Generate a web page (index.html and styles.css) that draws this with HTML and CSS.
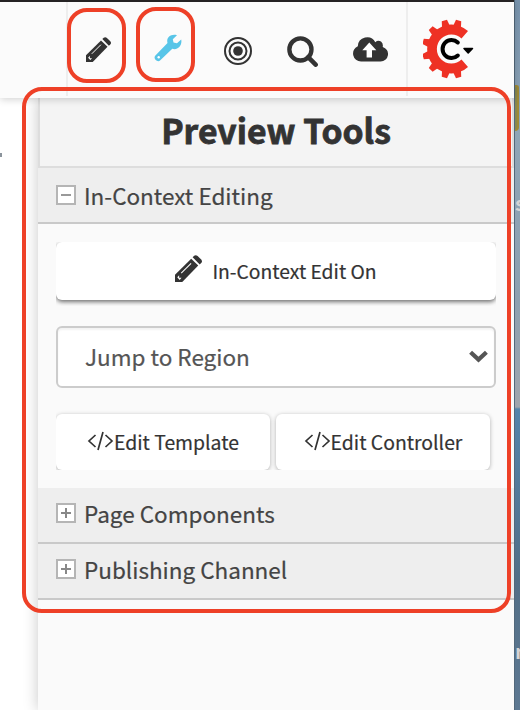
FILE: index.html
```html
<!DOCTYPE html>
<html lang="en">
<head>
<meta charset="utf-8">
<title>Preview Tools</title>
<link rel="stylesheet" href="styles.css">
</head>
<body>
<svg class="defs" width="0" height="0" aria-hidden="true">
  <symbol id="pencil" viewBox="0 0 26 26">
    <path d="M0 26V19L15.6 3.6L22.4 10.2L7 26Z" fill="#333"/>
    <path d="M17 2.2L18.4 .8Q20 -.6 21.8 1L25.2 4.4Q26.800 6.200 25.200 7.800L23.800 9.200Z" fill="#333"/>
    <path d="M6 17.500L15.500 8" stroke="#fff" stroke-width="1" fill="none"/>
    <path d="M2.200 21.500L4 19.500V22H6.300L4.500 24Z" fill="#fff"/>
  </symbol>
  <symbol id="code" viewBox="0 0 26 20">
    <path d="M8 4L1.500 10L8 16M18 4L24.500 10L18 16M15.500 1L10.500 19" fill="none" stroke="#333" stroke-width="1.700"/>
  </symbol>
</svg>
<div class="screen">
  <div class="window">
    <header class="toolbar">
      <nav class="tools">
        <svg class="tool-pencil"><use href="#pencil"/></svg>
        <svg class="tool-wrench" viewBox="0 0 28 28">
          <path d="M13.500 9C12 4 16.500 -.5 23 1.200L18.800 5.200L19.500 8.600L23 9.200L27.200 5.600C28.500 12 23.500 16.500 18.300 14.800L6.300 26.300C3.500 29 -1.500 24.500 1.400 21.500Z" fill="#58c5e8"/>
          <circle cx="4.700" cy="23.300" r="1.200" fill="#fff"/>
        </svg>
        <svg class="tool-target" viewBox="0 0 28 28" fill="none" stroke="#333" stroke-width="2">
          <circle cx="14" cy="14" r="13"/><circle cx="14" cy="14" r="8.500"/><circle cx="14" cy="14" r="4.800" fill="#333" stroke="none"/>
        </svg>
        <svg class="tool-search" viewBox="0 0 30 30" fill="none" stroke="#333">
          <circle cx="13" cy="13" r="10.700" stroke-width="4.200"/><path d="M20.500 20.500L27.700 27.700" stroke-width="4.400" stroke-linecap="round"/>
        </svg>
        <svg class="tool-cloud" viewBox="0 0 35 26">
          <path d="M8 25.500A8 8 0 0 1 4.800 10.200A9.300 9.300 0 0 1 22.300 6.200Q25 3.800 28 5.600Q30.500 7.500 29.700 11A7.400 7.400 0 0 1 27.500 25.500Z" fill="#333"/>
          <path d="M16.300 6.500L23.300 14.300H19V21.500H13.600V14.300H9.300Z" fill="#fff"/>
        </svg>
      </nav>
      <div class="brand">
        <svg class="logo" viewBox="0 0 52 60">
          <defs><path id="tooth" d="M24.500 7L25.800 .6H31.200L32.500 7Z"/></defs>
          <g fill="#ee3124">
            <path d="M45 12A24.400 24.400 0 1 0 45 48L38.500 40.600A14.600 14.600 0 1 1 38.500 19.400Z"/>
            <use href="#tooth" transform="rotate(14 28.500 30)"/>
            <use href="#tooth" transform="rotate(-14 28.500 30)"/>
            <use href="#tooth" transform="rotate(-45 28.500 30)"/>
            <use href="#tooth" transform="rotate(-75 28.500 30)"/>
            <use href="#tooth" transform="rotate(-105 28.500 30)"/>
            <use href="#tooth" transform="rotate(-135 28.500 30)"/>
            <use href="#tooth" transform="rotate(-166 28.500 30)"/>
            <use href="#tooth" transform="rotate(166 28.500 30)"/>
          </g>
          <path d="M34.800 23.500A9 9 0 1 0 34.800 36.500" fill="none" stroke="#000" stroke-width="4" stroke-linecap="round"/>
          <path d="M41 29.500H49.500L45.200 34Z" fill="#000" stroke="#000" stroke-width="1.500" stroke-linejoin="round"/>
        </svg>
      </div>
    </header>
    <main class="workspace">
      <div class="page"><span class="page-mark"></span></div>
      <aside class="panel">
        <h1 class="title">Preview Tools</h1>
        <h2 class="section"><span class="toggle open"></span><span class="label">In-Context Editing</span></h2>
        <div class="content">
          <div class="edit-row"><button class="edit-on"><svg class="edit-icon"><use href="#pencil"/></svg><span>In-Context Edit On</span></button></div>
          <div class="select"><span class="label">Jump to Region</span><svg class="chevron" viewBox="0 0 18 12"><path d="M1.500 2L9 9L16.500 2" fill="none" stroke="#555" stroke-width="4"/></svg></div>
          <div class="code-row">
            <button class="code-button"><svg class="code-icon"><use href="#code"/></svg><span class="label">Edit Template</span></button>
            <button class="code-button"><svg class="code-icon"><use href="#code"/></svg><span class="label">Edit Controller</span></button>
          </div>
        </div>
        <h2 class="section raised"><span class="toggle"></span><span class="label">Page Components</span></h2>
        <h2 class="section raised"><span class="toggle"></span><span class="label">Publishing Channel</span></h2>
      </aside>
    </main>
  </div>
  <div class="desktop"><span class="folder"></span><span class="file-one">s</span><span class="file-two">n</span></div>
</div>
<div class="mark mark-pencil"></div>
<div class="mark mark-wrench"></div>
<div class="mark mark-panel"></div>
</body>
</html>
```
FILE: styles.css
```css
* { box-sizing: border-box; }
body { margin: 0; width: 520px; height: 710px; overflow: hidden; position: relative; font-family: "Noto Sans CJK SC", "Open Sans", sans-serif; color: #333; }
svg { display: block; flex: none; }
.defs { position: absolute; }
.screen { display: flex; height: 710px; }
.window { width: 514px; flex: none; display: flex; flex-direction: column; background: #fafafa; }
.toolbar { height: 98px; border-top: 2px solid #252324; padding-bottom: 2px; background: #fbfbfb; display: flex; justify-content: flex-end; box-shadow: 0 1px 8px rgba(0,0,0,.2); position: relative; z-index: 1; }
.tools { width: 340px; border-left: 2px solid #eee; display: flex; align-items: center; padding-left: 18px; }
.tool-pencil { width: 25px; height: 25px; margin-top: 1px; }
.tool-wrench { width: 28px; height: 28px; margin: -2px 0 0 43px; }
.tool-target { width: 28px; height: 28px; margin: 3px 0 0 42px; }
.tool-search { width: 31px; height: 31px; margin: 4px 0 0 35px; }
.tool-cloud { width: 35px; height: 26px; margin: 0 0 0 35px; }
.brand { width: 108px; border-left: 2px solid #eee; padding: 17px 0 0 15px; }
.logo { width: 52px; height: 60px; }
.workspace { flex: 1; display: flex; }
.page { width: 38px; background: #fff; padding-top: 55px; }
.page-mark { display: block; width: 2px; height: 4px; background: #8b949c; }
.panel { width: 476px; background: #fafafa; box-shadow: 0 0 14px rgba(0,0,0,.22); }
.title { margin: 0; height: 70px; border: 2px solid #ddd; border-top: 0; background: #f4f4f4; text-align: center; font-size: 33.700px; line-height: 64px; font-weight: 700; -webkit-text-stroke: .8px #333; }
.section { margin: 0; height: 56px; border-bottom: 2px solid #c9c9c9; background: #eee; display: flex; align-items: center; gap: 8px; padding-left: 18px; font-size: 22.500px; font-weight: 400; color: #444; line-height: 54px; }
.section.raised { padding-bottom: 4px; }
.label { -webkit-text-stroke: .2px currentColor; margin-top: -2px; }
.section .label { margin-top: 0; }
.toggle { width: 20px; height: 20px; border: 2px solid #b5b5b5; background: linear-gradient(#888,#888) center/10px 2px no-repeat, linear-gradient(#888,#888) center/2px 10px no-repeat, #fff; }
.toggle.open { background: linear-gradient(#999,#999) center/10px 2px no-repeat, #fff; }
.content { height: 264px; padding: 18px 18px 0; }
.edit-row { overflow: hidden; height: 64px; }
button { font: inherit; color: #333; border: 0; background: #fff; padding: 0; display: flex; align-items: center; justify-content: center; }
.edit-on { width: 440px; height: 58px; border-radius: 6px; box-shadow: 0 2px 4px rgba(0,0,0,.55); gap: 10px; font-size: 19.300px; -webkit-text-stroke: .2px #333; }
.edit-icon { width: 27px; height: 27px; margin-top: -6px; }
.select { margin-top: 20px; height: 62px; border: 2px solid #ccc; border-radius: 6px; background: #fff; box-shadow: inset 0 2px 2px rgba(0,0,0,.05); display: flex; align-items: center; justify-content: space-between; padding: 0 6px 0 27px; font-size: 22.500px; color: #555; }
.chevron { width: 19px; height: 13px; margin-top: -2px; }
.code-row { margin-top: 21px; height: 61px; padding-top: 5px; overflow: hidden; display: flex; gap: 6px; }
.code-button { width: 214px; height: 56px; border-radius: 6px; box-shadow: 0 1px 4px rgba(0,0,0,.3); font-size: 19.400px; }
.code-icon { width: 27px; height: 20px; margin-top: -2px; }
.desktop { width: 6px; background: linear-gradient(#7894ae, #8fa5b7 120px, #8da0b0 300px, #a0a5ad 407px, #5484ab 409px, #536f87 580px, #5d7892 710px); border-left: 1px solid #52687b; overflow: hidden; color: #d4d4d4; font-size: 20px; font-weight: 700; display: flex; flex-direction: column; line-height: 24px; }
.folder { width: 4px; height: 46px; margin-top: 85px; border: 2px solid #a08a34; border-left: 0; border-radius: 0 4px 6px 0; background: #87884f; }
.file-one { margin-top: 60px; }
.file-two { margin-top: 424px; }
.mark { position: absolute; z-index: 2; border: 4px solid #ee4027; border-radius: 20px; }
.mark-pencil { left: 67px; top: 8px; width: 59px; height: 75px; }
.mark-wrench { left: 136px; top: 7px; width: 59px; height: 75px; }
.mark-panel { left: 22px; top: 87px; width: 489px; height: 526px; }
```
